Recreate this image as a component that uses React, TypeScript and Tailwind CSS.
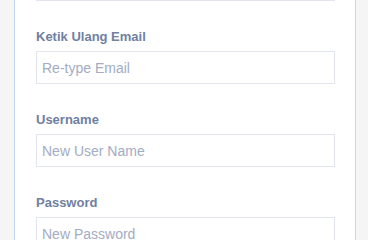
import React from "react";

const fields = [
  { label: "Ketik Ulang Email", placeholder: "Re-type Email", type: "email" },
  { label: "Username", placeholder: "New User Name", type: "text" },
  { label: "Password", placeholder: "New Password", type: "password" },
];

const inputClass =
  "block w-[299px] h-[33px] bg-white border border-[#e2e5ed] pl-[5px] pt-[1px] text-[14px] text-[#333] placeholder:text-[#a3acc2] outline-none";

const App = () => {
  return (
    <main
      className="w-[368px] h-[240px] overflow-hidden bg-[#f5f5f5]"
      style={{ fontFamily: '"Liberation Sans", Arial, sans-serif' }}
    >
      <div className="ml-[14px] w-[342px] h-[240px] bg-white border-x border-[#c4d5f3] pl-[21px]">
        <form action="" className="flex flex-col">
          <input type="text" className={`${inputClass} -mt-[32px]`} />

          {fields.map((f) => (
            <span key={f.label} className="flex flex-col mt-[28px]">
              <label className="text-[13px] leading-[16px] font-bold text-[#7080a1] mb-[6px]">
                {f.label}
              </label>
              <input
                type={f.type}
                placeholder={f.placeholder}
                className={inputClass}
              />
            </span>
          ))}
        </form>
      </div>
    </main>
  );
};

export default App;
